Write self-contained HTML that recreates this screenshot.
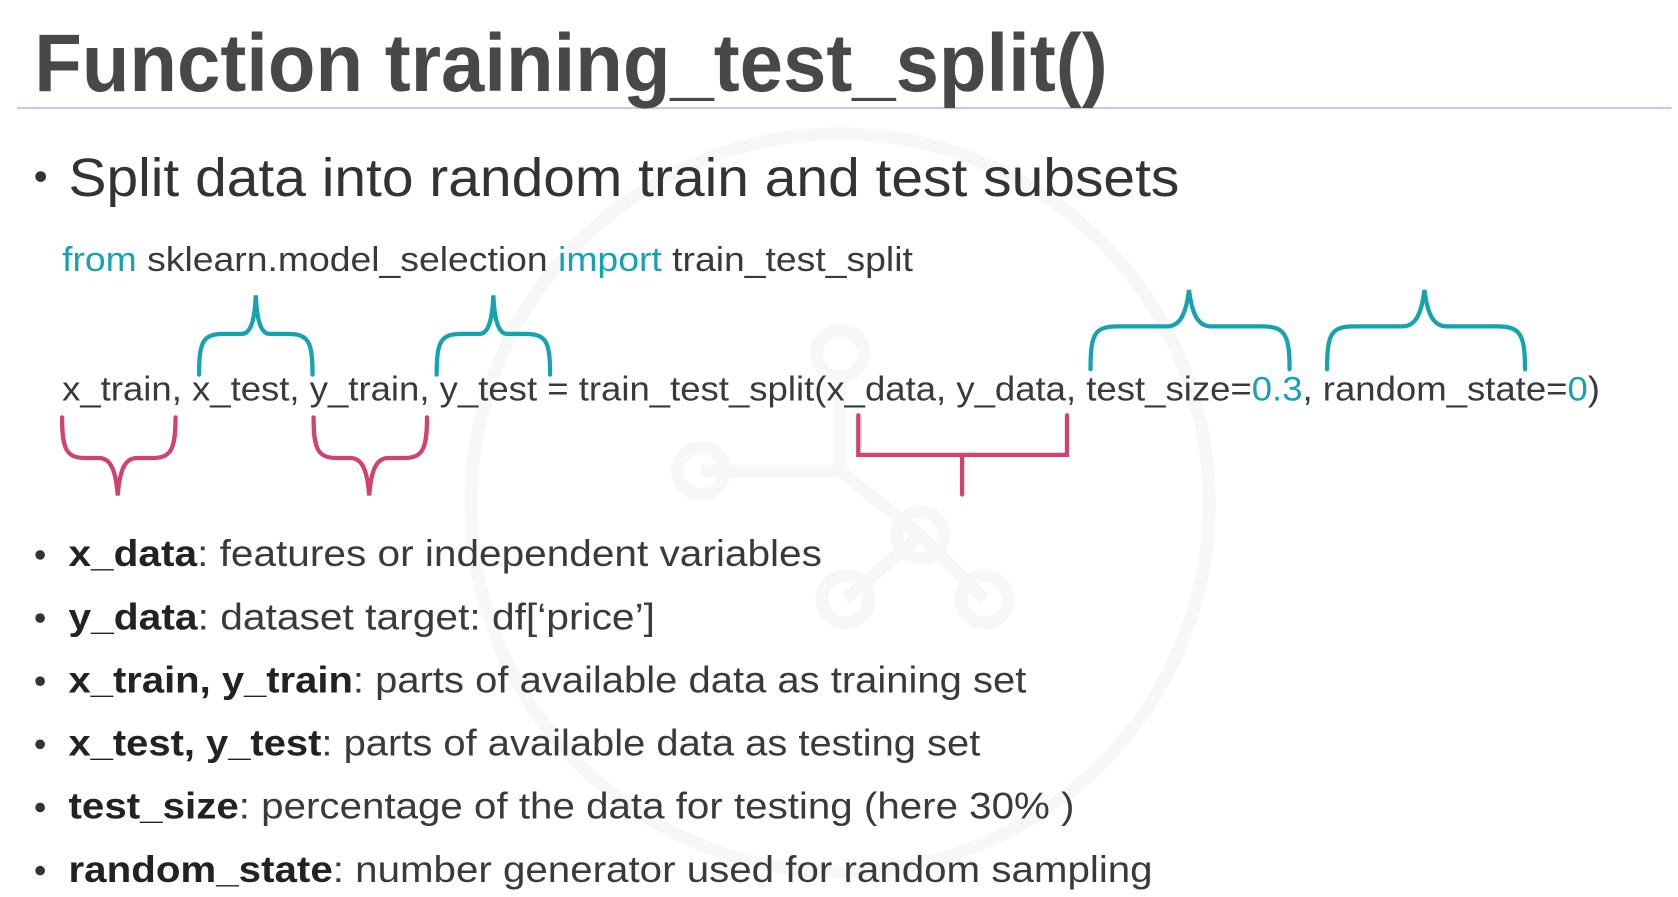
<!DOCTYPE html>
<html><head><meta charset="utf-8"><style>
html,body{margin:0;padding:0;background:#fff;overflow:hidden}
#wrap{position:absolute;left:0;top:0;width:1568px;height:838px;transform:scale(1.0702);transform-origin:0 0;font-family:"Liberation Sans",sans-serif;color:#3a3a3a}
.t{position:absolute;white-space:nowrap;transform-origin:0 0;line-height:1}
.k{color:#17a2b0}
.b{font-weight:bold;color:#222}
.dot{position:absolute;width:9px;height:9px;border-radius:50%;background:#333}
</style></head><body>
<div id="wrap">
<svg width="1568" height="838" style="position:absolute;left:0;top:0">
<g fill="none" stroke="#f7f7f8" stroke-width="12">
<circle cx="785" cy="470" r="345"/>
<circle cx="785" cy="330" r="22"/><circle cx="655" cy="440" r="22"/><circle cx="860" cy="500" r="22"/><circle cx="790" cy="560" r="22"/><circle cx="920" cy="560" r="22"/>
<path d="M785 352 L785 440 L655 440 M785 440 L860 500 M860 500 L920 560 M860 500 L790 560"/>
</g>
<line x1="16" y1="101" x2="1562" y2="101" stroke="#c9c9e6" stroke-width="2"/>
<g fill="none" stroke="#17a2b0" stroke-width="4" stroke-linecap="round">
<path d="M186 350 C186 318 190 312 210 312 L226 312 C234 312 238 300 239 276 C240 300 244 312 252 312 L268 312 C288 312 292 318 292 350"/>
<path d="M408 350 C408 318 412 312 432 312 L448 312 C456 312 460 300 461 276 C462 300 466 312 474 312 L490 312 C510 312 514 318 514 350"/>
<path d="M1019 345 C1019 311 1023 305 1045 305 L1090 305 C1102 305 1108 295 1111 271 C1114 295 1120 305 1132 305 L1178 305 C1200 305 1205 311 1205 345"/>
<path d="M1240 345 C1240 311 1244 305 1266 305 L1310 305 C1322 305 1328 295 1331 271 C1334 295 1340 305 1352 305 L1398 305 C1420 305 1425 311 1425 345"/>
</g>
<g fill="none" stroke="#d0436e" stroke-width="4" stroke-linecap="round">
<path d="M58 390 C58 420 62 428 80 428 L92 428 C102 428 108 436 110 463 C112 436 118 428 128 428 L142 428 C160 428 164 420 164 390"/>
<path d="M293 390 C293 420 297 428 315 428 L327 428 C337 428 343 436 345 463 C347 436 353 428 363 428 L377 428 C395 428 399 420 399 390"/>
<path d="M802 388 L802 425 L997 425 L997 388 M899 425 L899 462"/>
</g>
</svg>
<div class="t fit" style="left:32px;top:22px;font-size:76px;font-weight:bold;color:#484848" w="1003">Function training_test_split()</div>
<div class="dot" style="left:33px;top:160px;width:10px;height:10px"></div>
<div class="t fit" style="left:64px;top:141px;font-size:50px;color:#333" w="1038">Split data into random train and test subsets</div>
<div class="t fit" style="left:58px;top:226px;font-size:32px" w="795"><span class="k">from</span> sklearn.model_selection <span class="k">import</span> train_test_split</div>
<div class="t fit" style="left:58px;top:347px;font-size:32px" w="1437">x_train, x_test, y_train, y_test = train_test_split(x_data, y_data, test_size=<span class="k">0.3</span>, random_state=<span class="k">0</span>)</div>

<div class="dot" style="left:33px;top:514px"></div>
<div class="t fit" style="left:64px;top:500px;font-size:35px" w="704"><span class="b">x_data</span>: features or independent variables</div>
<div class="dot" style="left:33px;top:573px"></div>
<div class="t fit" style="left:64px;top:559px;font-size:35px" w="548"><span class="b">y_data</span>: dataset target: df[‘price’]</div>
<div class="dot" style="left:33px;top:632px"></div>
<div class="t fit" style="left:64px;top:618px;font-size:35px" w="895"><span class="b">x_train, y_train</span>: parts of available data as training set</div>
<div class="dot" style="left:33px;top:691px"></div>
<div class="t fit" style="left:64px;top:677px;font-size:35px" w="852"><span class="b">x_test, y_test</span>: parts of available data as testing set</div>
<div class="dot" style="left:33px;top:750px"></div>
<div class="t fit" style="left:64px;top:736px;font-size:35px" w="940"><span class="b">test_size</span>: percentage of the data for testing (here 30% )</div>
<div class="dot" style="left:33px;top:809px"></div>
<div class="t fit" style="left:64px;top:795px;font-size:35px" w="1013"><span class="b">random_state</span>: number generator used for random sampling</div>
</div>
<script>
document.querySelectorAll('.fit').forEach(function(e){var w=+e.getAttribute('w');var r=e.getBoundingClientRect().width/1.0702;if(r>0)e.style.transform='scaleX('+(w/r)+')';});
</script>
</body></html>
